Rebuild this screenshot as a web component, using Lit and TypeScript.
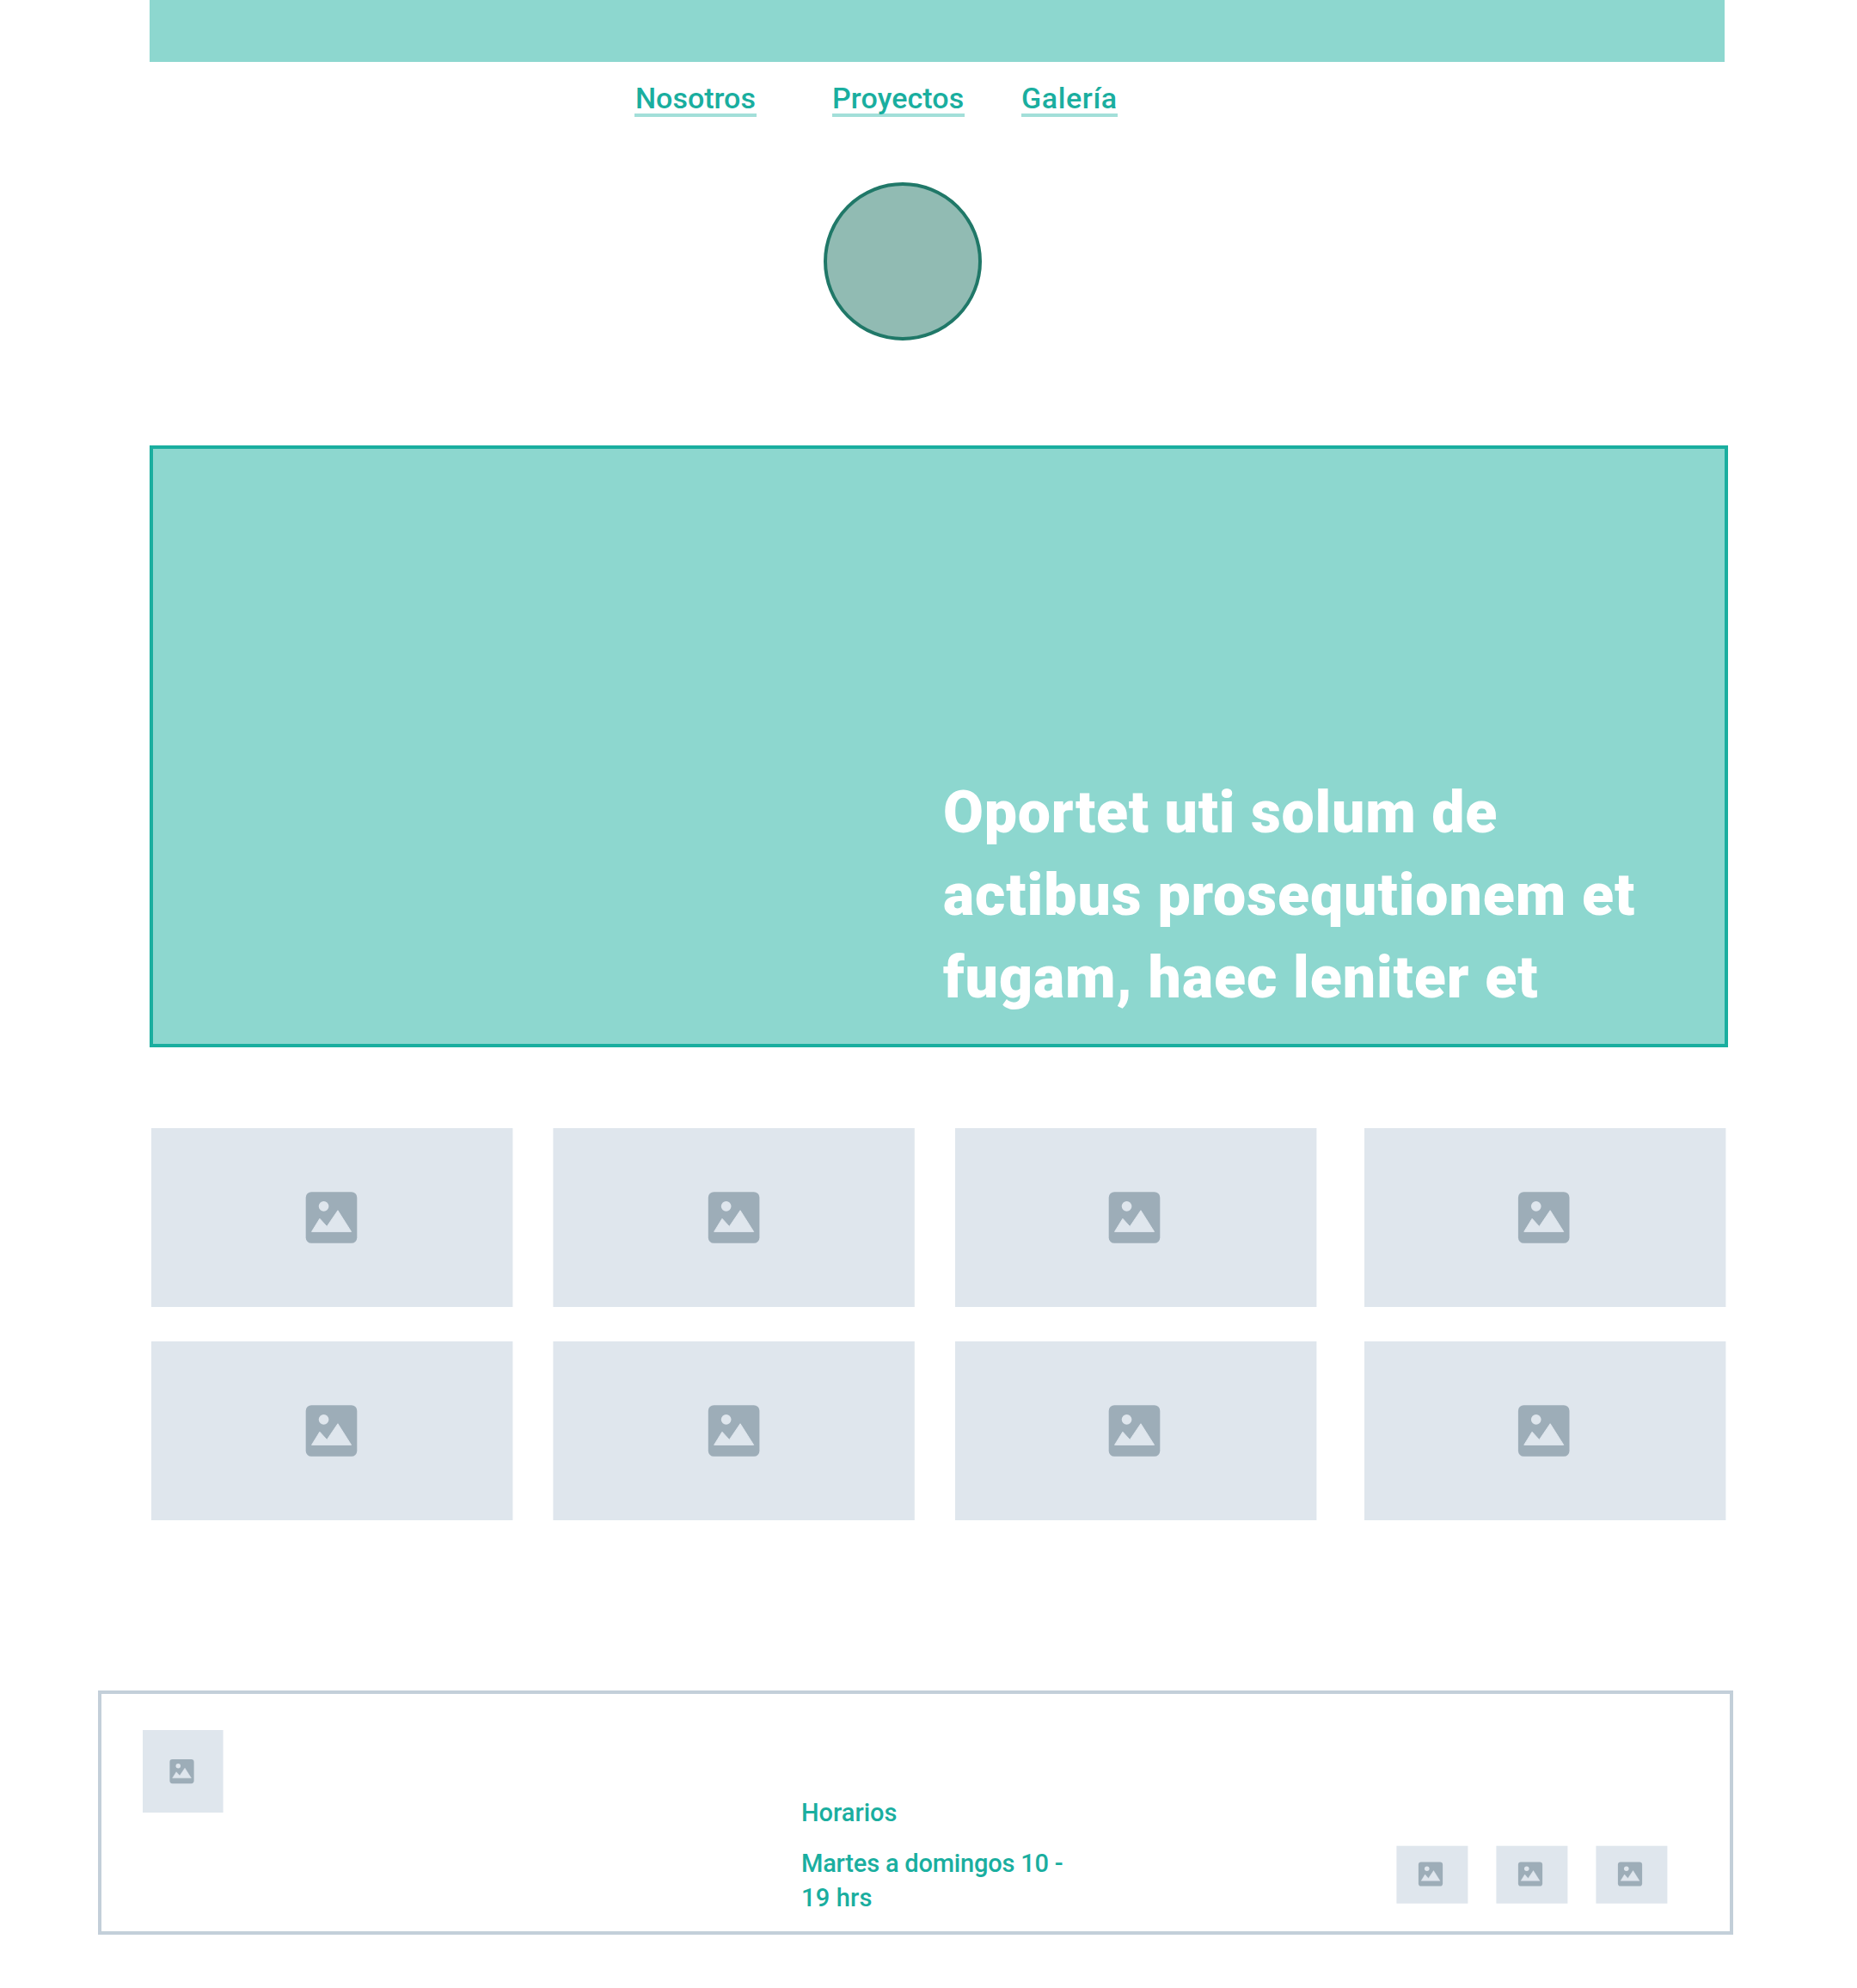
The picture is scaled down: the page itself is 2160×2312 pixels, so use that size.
import { LitElement, html, css } from "lit";
import { customElement, property } from "lit/decorators.js";

/** Grey image placeholder: a flat box with a picture glyph inside. */
@customElement("image-placeholder")
class ImagePlaceholder extends LitElement {
  @property({ type: Number }) w = 420.4;
  @property({ type: Number }) h = 208;
  /** Sub-pixel shift of the box inside its layout cell. */
  @property({ type: Number }) dx = 0;
  @property({ type: Number }) dy = 0;
  /** Glyph position and size. */
  @property({ type: Number }) ix = 179.7;
  @property({ type: Number }) iy = 74.2;
  @property({ type: Number }) size = 59.6;

  static styles = css`
    :host { display: block; flex: none; }
    svg { display: block; }
    .box { fill: #dfe6ed; }
    .glyph { fill: #9dadb8; }
    .cut { fill: #dfe6ed; stroke: #dfe6ed; stroke-width: 1; stroke-linejoin: round; }
  `;

  render() {
    const width = Math.ceil(this.dx + this.w);
    const height = Math.ceil(this.dy + this.h);
    return html`<svg width=${width} height=${height} viewBox="0 0 ${width} ${height}">
      <rect class="box" x=${this.dx} y=${this.dy} width=${this.w} height=${this.h}></rect>
      <g transform="translate(${this.ix} ${this.iy}) scale(${this.size / 60})">
        <rect class="glyph" width="60" height="60" rx="6.6"></rect>
        <circle class="box" cx="21" cy="16.7" r="5.9"></circle>
        <path class="cut" d="M6.9 46.5 L16.3 31.3 L24.7 40.5 L37.5 21.7 L53.2 46.5 Z"></path>
      </g>
    </svg>`;
  }
}

@customElement("app-root")
class AppRoot extends LitElement {
  static styles = css`
    :host {
      display: flex;
      flex-direction: column;
      box-sizing: border-box;
      width: 2160px;
      height: 2312px;
      overflow: hidden;
      background: #fff;
      color: #1aae9f;
      font-family: Roboto, "Liberation Sans", sans-serif;
      font-weight: 500;
    }
    .topbar { flex: none; width: 1832px; height: 72px; margin-left: 174px; background: #8dd7cf; }
    nav { display: flex; margin: 24px 0 0 738px; }
    .link {
      box-sizing: border-box;
      height: 40px;
      border-bottom: 4px solid #a3dfd9;
      font-size: 34px;
      line-height: 36px;
      color: inherit;
      text-decoration: none;
      white-space: nowrap;
    }
    .nosotros { width: 142px; margin-right: 88px; text-indent: 1px; }
    .proyectos { width: 154px; margin-right: 66px; letter-spacing: 0.1px; }
    .galeria { width: 112px; letter-spacing: 0.6px; }
    .avatar {
      flex: none;
      box-sizing: border-box;
      width: 184px;
      height: 184px;
      margin: 76px 0 0 958px;
      border: 4px solid #207868;
      border-radius: 50%;
      background: #91bbb3;
    }
    .hero {
      display: flex;
      align-items: flex-end;
      flex: none;
      box-sizing: border-box;
      width: 1836px;
      height: 700px;
      margin: 122px 0 0 174px;
      padding: 0 0 29px 919px;
      border: 4px solid #1aae9f;
      background: #8dd7cf;
    }
    h1 {
      margin: 0;
      font-size: 68px;
      font-weight: 900;
      line-height: 96px;
      letter-spacing: 0.92px;
      color: #fff;
      white-space: nowrap;
    }
    .first { letter-spacing: 0.75px; }
    .gallery {
      display: grid;
      grid-template-columns: 467px 468px 476px 421px;
      row-gap: 40px;
      margin: 94px 0 0 176px;
    }
    footer {
      display: flex;
      flex: none;
      box-sizing: border-box;
      width: 1902px;
      height: 284px;
      margin: 198px 0 0 114px;
      border: 4px solid #c3cfd9;
    }
    .logo { margin: 42px 0 0 48px; }
    .hours {
      width: 320px;
      margin: 118px 0 0 672px;
      font-size: 29px;
      line-height: 40px;
      white-space: nowrap;
    }
    .hours p { margin: 0 0 19px; }
    .days { letter-spacing: -0.2px; }
    .time { letter-spacing: 0.2px; }
    .social { display: flex; gap: 32px; margin: 176px 0 0 372px; }
  `;

  private cards = [
    { dx: 0, ix: 179.7 },
    { dx: 0.4, ix: 180.8 },
    { dx: 0, ix: 178.7 },
    { dx: 0, ix: 178.9 },
  ];

  render() {
    return html`
      <div class="topbar"></div>
      <nav>
        <a class="link nosotros">Nosotros</a>
        <a class="link proyectos">Proyectos</a>
        <a class="link galeria">Galería</a>
      </nav>
      <div class="avatar"></div>
      <section class="hero">
        <h1><span class="first">Oportet uti solum de</span><br />actibus prosequtionem et<br />fugam, haec leniter et</h1>
      </section>
      <section class="gallery">
        ${[...this.cards, ...this.cards].map(
          (c) => html`<image-placeholder .dx=${c.dx} .ix=${c.ix}></image-placeholder>`
        )}
      </section>
      <footer>
        <image-placeholder class="logo" .w=${93.6} .h=${96} .ix=${31.4} .iy=${34} .size=${28.2}></image-placeholder>
        <div class="hours">
          <p>Horarios</p>
          <p><span class="days">Martes a domingos 10 -</span><br /><span class="time">19 hrs</span></p>
        </div>
        <div class="social">
          ${[0, 1, 2].map(
            () => html`<image-placeholder .w=${83} .h=${67} .dx=${0.4} .dy=${0.7} .ix=${25.9} .iy=${19.4} .size=${28.2}></image-placeholder>`
          )}
        </div>
      </footer>
    `;
  }
}
